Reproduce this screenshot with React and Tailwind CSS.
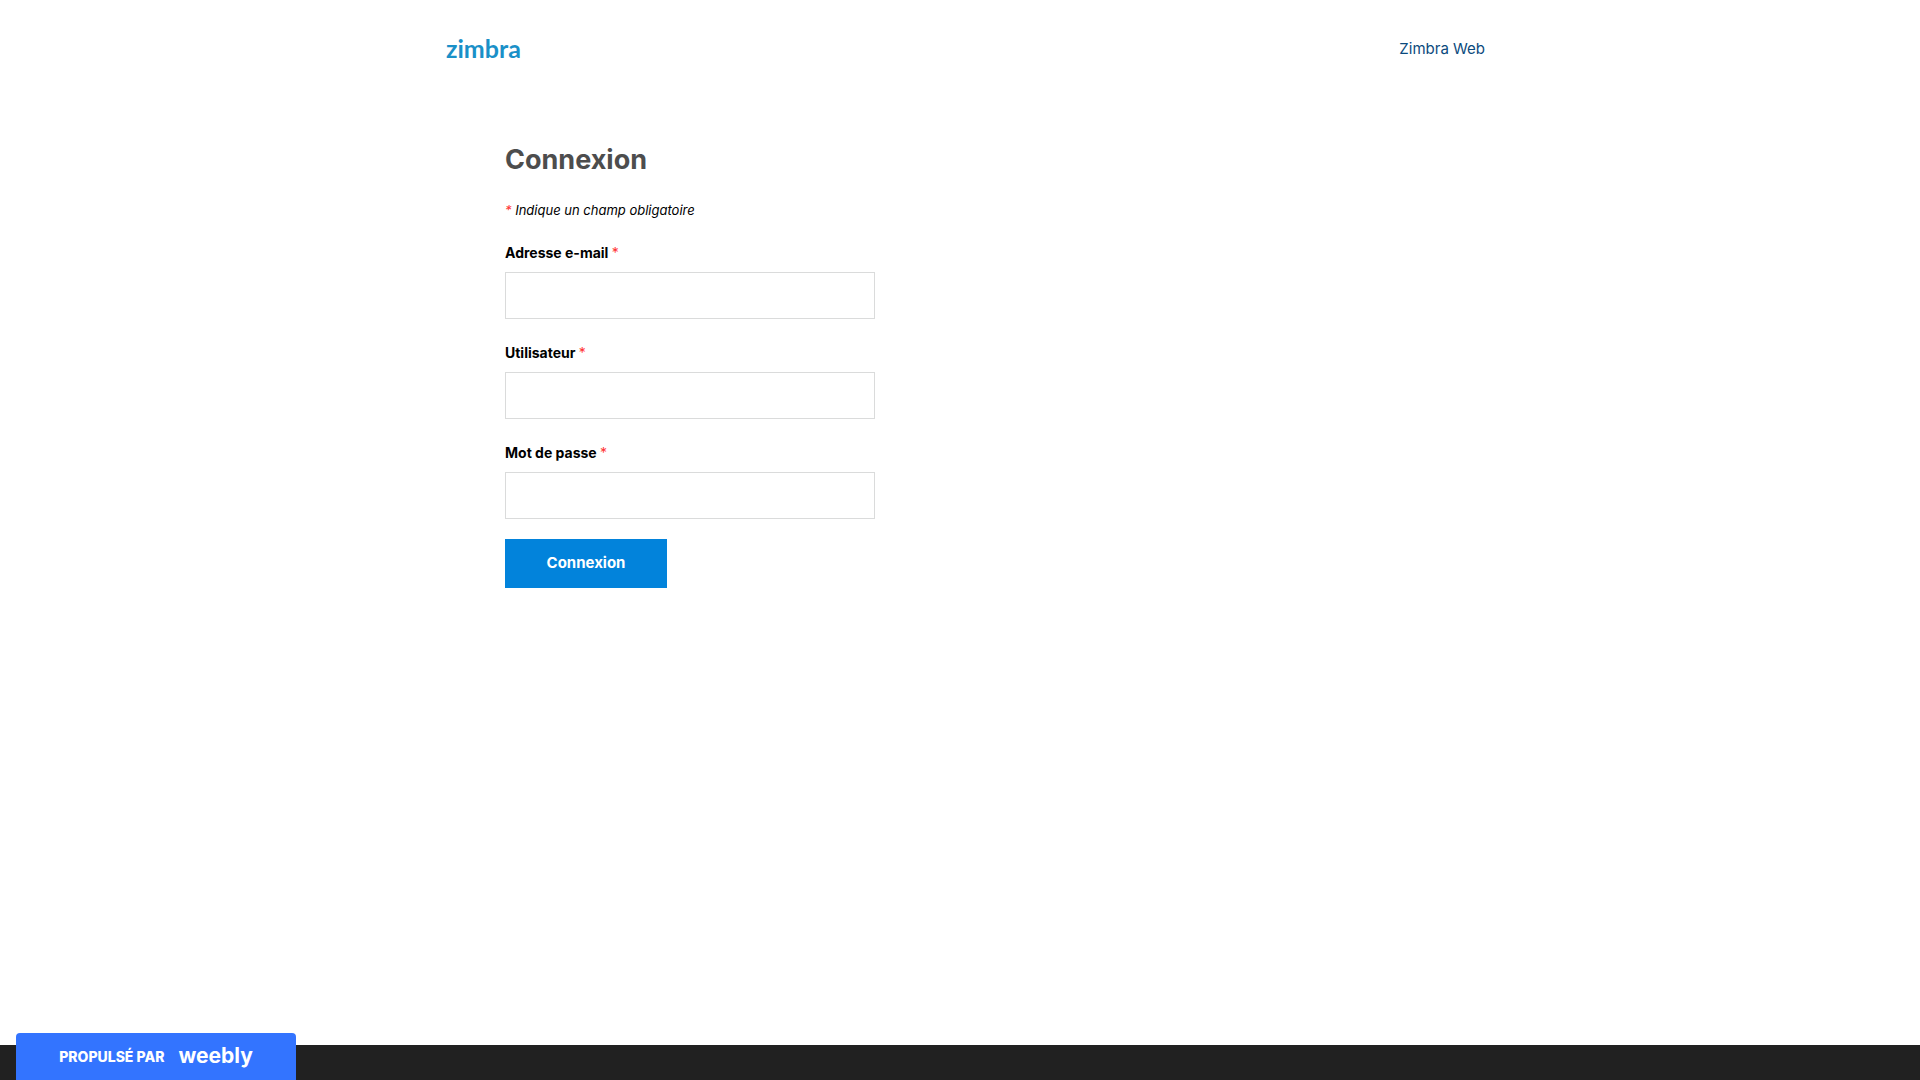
const fields = [
  { id: 'email', label: 'Adresse e-mail', type: 'email' },
  { id: 'username', label: 'Utilisateur', type: 'text' },
  { id: 'password', label: 'Mot de passe', type: 'password' },
]

function Required() {
  return <span className="font-normal text-[#ff3333]">*</span>
}

function Header() {
  return (
    <header className="mx-auto flex h-24 w-full max-w-[1050px] items-center justify-between">
      <a href="#" className="pl-[11px] font-['Lato',sans-serif] text-[25px] leading-8 font-bold text-[#1a90c8]">
        zimbra
      </a>
      <nav>
        <a href="#" className="text-[15px] leading-6 text-[#0b4a7d]">Zimbra Web</a>
      </nav>
    </header>
  )
}

function LoginForm() {
  return (
    <form className="w-full max-w-[370px]" onSubmit={(e) => e.preventDefault()}>
      <h1 className="text-[27px] leading-8 font-bold text-[#4d4d4d]">Connexion</h1>
      <p className="mt-6 text-[13px] leading-5 text-black italic">
        <Required /> Indique un champ obligatoire
      </p>
      <div className="mt-5 flex flex-col gap-[21px]">
        {fields.map((field) => (
          <div key={field.id} className="flex flex-col">
            <label htmlFor={field.id} className="mb-[6px] text-sm leading-[26px] font-bold text-black">
              {field.label} <Required />
            </label>
            <input
              id={field.id}
              name={field.id}
              type={field.type}
              className="h-[47px] w-full border border-[#dadbdb] bg-white px-3 text-base outline-none focus:border-[#0283db]"
            />
          </div>
        ))}
      </div>
      <button type="submit" className="mt-5 h-[49px] w-[162px] bg-[#0283db] text-[15px] font-bold text-white">
        Connexion
      </button>
    </form>
  )
}

function WeeblyBadge() {
  return (
    <a
      href="#"
      className="fixed bottom-0 left-4 flex h-[47px] w-[280px] items-center justify-center gap-3.5 rounded-t bg-[#3374ff] font-['Inter',sans-serif] text-white"
    >
      <span className="text-sm font-extrabold">PROPULSÉ PAR</span>
      <span className="pb-0.5 text-[21px] leading-7 font-bold">weebly</span>
    </a>
  )
}

export default function App() {
  return (
    <div className="flex min-h-screen flex-col bg-white font-['Inter',sans-serif]">
      <Header />
      <main className="mx-auto w-full max-w-[910px] flex-1 pt-12">
        <LoginForm />
      </main>
      <footer className="h-[35px] bg-[#212121]" />
      <WeeblyBadge />
    </div>
  )
}
